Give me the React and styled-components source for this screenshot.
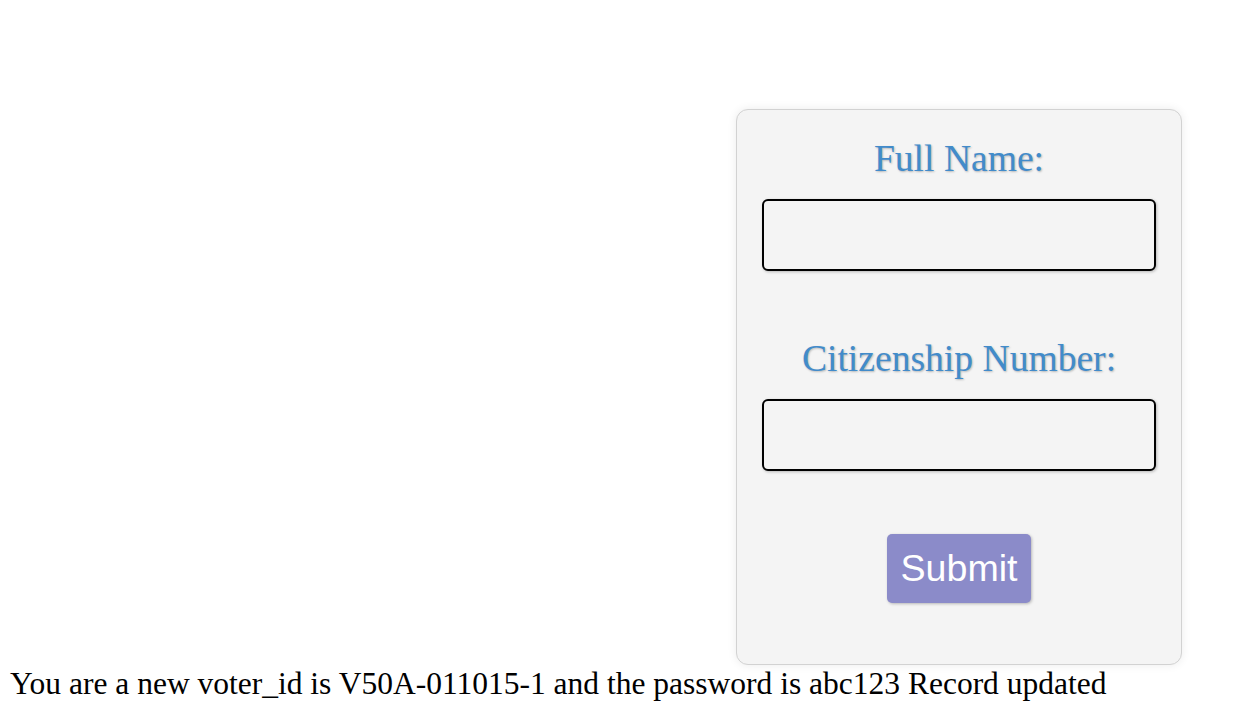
import React from "react";
import styled, { createGlobalStyle } from "styled-components";

const Global = createGlobalStyle`
  body {
    margin: 8px;
    background: #ffffff;
    font-family: "Liberation Serif", "Times New Roman", serif;
  }
`;

const Stage = styled.div`
  display: flex;
  justify-content: flex-end;
  padding-top: 101px;
  padding-right: 47px;
`;

const Card = styled.form`
  width: 446px;
  box-sizing: border-box;
  background: #f4f4f4;
  border: 1px solid #d2d2d2;
  border-radius: 12px;
  box-shadow: 0 0 10px rgba(0, 0, 0, 0.08);
  padding: 27px 25px 61px;
  display: flex;
  flex-direction: column;
  align-items: center;
`;

const Label = styled.label`
  display: block;
  font-family: "Liberation Serif", "Times New Roman", serif;
  font-size: 37.6px;
  line-height: 42px;
  padding-top: 1px;
  color: #428bca;
  text-shadow: 1px 1px 2px rgba(0, 0, 0, 0.25);
  text-align: center;
  margin-top: ${(p) => (p.$first ? "0" : "66px")};
  margin-bottom: 19px;
`;

const Input = styled.input`
  width: 100%;
  height: 72px;
  box-sizing: border-box;
  border: 2px solid #000;
  border-radius: 6px;
  background: #f4f4f4;
  box-shadow: 1px 1px 3px rgba(0, 0, 0, 0.25);
  font-size: 24px;
  padding: 0 10px;
  outline: none;
`;

const Button = styled.button`
  margin-top: 63px;
  background: #8b8bc9;
  color: #ffffff;
  border: none;
  border-radius: 5px;
  font-family: "Liberation Sans", Arial, sans-serif;
  font-size: 37.6px;
  line-height: 43px;
  padding: 13px 14px;
  box-shadow: 1px 1px 3px rgba(0, 0, 0, 0.25);
  cursor: pointer;
`;

const Message = styled.div`
  font-family: "Liberation Serif", "Times New Roman", serif;
  font-size: 31.5px;
  color: #000;
  padding-left: 2px;
  padding-top: 1px;
`;

export default function App() {
  return (
    <>
      <Global />
      <Stage>
        <Card onSubmit={(e) => e.preventDefault()}>
          <Label $first htmlFor="fullname">Full Name:</Label>
          <Input id="fullname" type="text" />
          <Label htmlFor="citizenship">Citizenship Number:</Label>
          <Input id="citizenship" type="text" />
          <Button type="submit">Submit</Button>
        </Card>
      </Stage>
      <Message>
        You are a new voter_id is V50A-011015-1 and the password is abc123 Record updated
      </Message>
    </>
  );
}
